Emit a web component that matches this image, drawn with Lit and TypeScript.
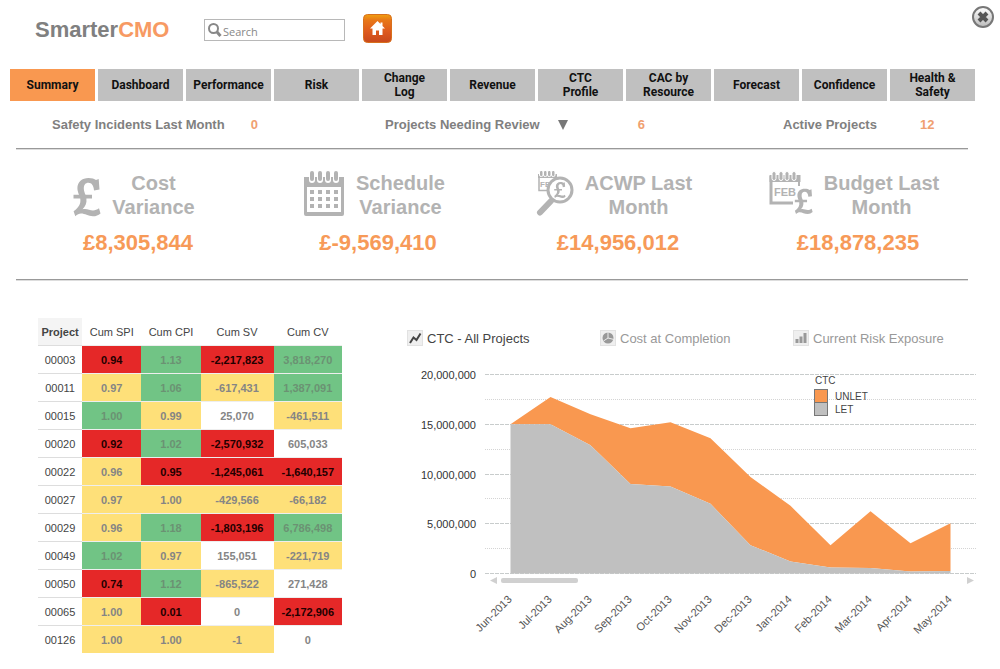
import { LitElement, html, svg, css } from "lit";
import { customElement, property, state } from "lit/decorators.js";
import { classMap } from "lit/directives/class-map.js";

type Tone = "r" | "g" | "y" | "n";
type Cell = [string, Tone];

const NAV: string[][] = [
  ["Summary"], ["Dashboard"], ["Performance"], ["Risk"], ["Change", "Log"], ["Revenue"],
  ["CTC", "Profile"], ["CAC by", "Resource"], ["Forecast"], ["Confidence"], ["Health &", "Safety"],
];

const COLUMNS = ["Cum SPI", "Cum CPI", "Cum SV", "Cum CV"];

const ROWS: { id: string; cells: Cell[] }[] = [
  { id: "00003", cells: [["0.94", "r"], ["1.13", "g"], ["-2,217,823", "r"], ["3,818,270", "g"]] },
  { id: "00011", cells: [["0.97", "y"], ["1.06", "g"], ["-617,431", "y"], ["1,387,091", "g"]] },
  { id: "00015", cells: [["1.00", "g"], ["0.99", "y"], ["25,070", "n"], ["-461,511", "y"]] },
  { id: "00020", cells: [["0.92", "r"], ["1.02", "g"], ["-2,570,932", "r"], ["605,033", "n"]] },
  { id: "00022", cells: [["0.96", "y"], ["0.95", "r"], ["-1,245,061", "r"], ["-1,640,157", "r"]] },
  { id: "00027", cells: [["0.97", "y"], ["1.00", "y"], ["-429,566", "y"], ["-66,182", "y"]] },
  { id: "00029", cells: [["0.96", "y"], ["1.18", "g"], ["-1,803,196", "r"], ["6,786,498", "g"]] },
  { id: "00049", cells: [["1.02", "g"], ["0.97", "y"], ["155,051", "n"], ["-221,719", "y"]] },
  { id: "00050", cells: [["0.74", "r"], ["1.12", "g"], ["-865,522", "y"], ["271,428", "n"]] },
  { id: "00065", cells: [["1.00", "y"], ["0.01", "r"], ["0", "n"], ["-2,172,906", "r"]] },
  { id: "00126", cells: [["1.00", "y"], ["1.00", "y"], ["-1", "y"], ["0", "n"]] },
];

/* Millions of pounds: [month, total, LET share] */
const CTC: [string, number, number][] = [
  ["Jun-2013", 15, 15], ["Jul-2013", 17.75, 15], ["Aug-2013", 16, 12.9], ["Sep-2013", 14.6, 9],
  ["Oct-2013", 15.2, 8.75], ["Nov-2013", 13.6, 7], ["Dec-2013", 9.7, 2.85], ["Jan-2014", 6.8, 1.2],
  ["Feb-2014", 2.85, 0.6], ["Mar-2014", 6.25, 0.55], ["Apr-2014", 3.05, 0.2], ["May-2014", 5.05, 0.25],
];

const calendarRings = (xs: number[]) =>
  xs.map((x) => svg`<rect x=${x} y="0.500" width="4" height="9" rx="2" fill="#b3b3b3" stroke="#fff" stroke-width="1"/>`);

/* Currency sign, drawn in a 28 by 40 box */
const POUND = "M26.500 12.500 21 13.400C20.600 8.500 18.500 5.800 15.500 5.800 12.500 5.800 10.800 8 10.800 11.200 10.800 13.600 11.600 15.500 12.500 17.700H19V21.500H13.400C14 26 12.400 29.500 9.500 32.300 13.500 31 16.500 33.400 20 33.400 22.300 33.400 24 32.700 26 31.300L27.500 36.500C25.300 38.400 23 39.300 20 39.300 15 39.300 12 36.600 8 36.600 6 36.600 4.300 37.400 2.300 39.300L.600 34.300C5.500 31 8.200 26.500 7.200 21.500H.500V17.700H6C5.200 15.700 4.400 13.700 4.400 11.300 4.400 5 9 1 15.500 1 19 1 21.300 1.800 23 3L25.700 2Z";

const ICONS: Record<string, unknown> = {
  pound: html`<svg width="28" height="46" viewBox="0 -6 28 46" aria-hidden="true"><path d=${POUND} fill="#b3b3b3"/></svg>`,
  calendar: html`<svg width="42" height="46" viewBox="0 0 42 46" aria-hidden="true">
    <path d="M1 6H41V43Q41 45 39 45H3Q1 45 1 43ZM4 16V41H38V16Z" fill="#b3b3b3" fill-rule="evenodd"/>
    ${[5, 13, 21, 29].map((x) => svg`<rect x=${x + 1} y="0" width="6" height="12" rx="3" fill="#fff"/><rect x=${x + 2} y="0" width="4" height="10" rx="2" fill="#b3b3b3"/>`)}
    ${[19, 26, 33].map((y) => [7, 15, 23, 31].map((x) => svg`<rect x=${x} y=${y} width="4" height="4" fill="#b3b3b3"/>`))}
  </svg>`,
  search: html`<svg width="38" height="46" viewBox="0 0 38 46" aria-hidden="true">
    <path d="M3 4V19.500H13M20 4V8" fill="none" stroke="#b3b3b3" stroke-width="1.500"/>
    <rect x="2" y="3" width="19" height="4" fill="#b3b3b3"/>
    ${[4, 8, 12, 16].map((x) => svg`<rect x=${x - 0.5} y="-.500" width="3.500" height="6" rx="1.500" fill="#b3b3b3" stroke="#fff" stroke-width="1"/>`)}
    <text x="4" y="16" font-family="Liberation Sans" font-size="8" font-weight="700" fill="#b3b3b3">FEB</text>
    <path d="M15 30 4 41.500" stroke="#b3b3b3" stroke-width="6" stroke-linecap="round"/>
    <path d="M19 26 14 31" stroke="#b3b3b3" stroke-width="3"/>
    <circle cx="24" cy="19" r="12" fill="#fff" stroke="#b3b3b3" stroke-width="3"/>
    <path transform="translate(18 10.500) scale(.420)" d=${POUND} fill="#b3b3b3"/>
  </svg>`,
  budget: html`<svg width="44" height="46" viewBox="0 0 44 46" aria-hidden="true">
    <path d="M2 5V32H24" fill="none" stroke="#b3b3b3" stroke-width="3"/>
    <path d="M30 5V15" fill="none" stroke="#b3b3b3" stroke-width="2"/>
    <rect x=".500" y="4" width="31" height="7" fill="#b3b3b3"/>
    ${calendarRings([3, 10, 16, 23])}
    <text x="5" y="25" font-family="Liberation Sans" font-size="11" font-weight="700" fill="#b3b3b3">FEB</text>
    <path transform="translate(25.500 17) scale(.660)" d=${POUND} fill="#b3b3b3" stroke="#fff" stroke-width="4" paint-order="stroke"/>
  </svg>`,
};

const KPIS = [
  { icon: "pound", title: ["Cost", "Variance"], value: "£8,305,844" },
  { icon: "calendar", title: ["Schedule", "Variance"], value: "£-9,569,410" },
  { icon: "search", title: ["ACWP Last", "Month"], value: "£14,956,012" },
  { icon: "budget", title: ["Budget Last", "Month"], value: "£18,878,235" },
];

const lines = (parts: string[]) => parts.map((p, i) => (i ? html`<br />${p}` : p));

@customElement("project-table")
class ProjectTable extends LitElement {
  static styles = css`
    :host { display: block; }
    .grid { width: 100%; border-collapse: collapse; table-layout: fixed; font-size: 11px; color: #444; }
    .grid th, .grid td { height: 27px; padding: 0; text-align: center; border-bottom: 1px solid #ddd; }
    .grid thead th { font-weight: 400; border-bottom-color: #eee; }
    .grid thead .key { width: 14.5%; font-weight: 700; background: #f4f4f4; border-bottom-color: #ddd; }
    .grid tbody th { font-weight: 400; }
    .grid .idx { width: 19.5%; }
    .grid .sv { width: 24%; }
    .grid tbody td { font-weight: 700; color: #858585; border-bottom-color: #eee; }
    .grid tbody tr:last-child > * { border-bottom: 0; }
    .grid tbody .r { background: #e52828; color: #200; }
    .grid tbody .g { background: #71c485; color: #6b9273; }
    .grid tbody .y { background: #fee079; }
  `;
  render() {
    return html`<table class="grid">
      <thead><tr>
        <th class="key" scope="col">Project</th>
        ${COLUMNS.map((c, i) => html`<th scope="col" class=${classMap({ idx: i < 2, sv: i === 2 })}>${c}</th>`)}
      </tr></thead>
      <tbody>${ROWS.map((r) => html`<tr><th scope="row">${r.id}</th>${r.cells.map(([v, t]) => html`<td class=${t}>${v}</td>`)}</tr>`)}</tbody>
    </table>`;
  }
}

@customElement("ctc-chart")
class CtcChart extends LitElement {
  static styles = css`
    :host { display: block; }
    .plot { display: block; width: 100%; height: auto; font-family: "Liberation Sans", Arial, sans-serif; font-size: 11px; }
    .major { stroke: #c8cccc; stroke-dasharray: 4 1; }
    .minor { stroke: #d4d4d4; stroke-dasharray: 1 1; }
    .axis { fill: #333; text-anchor: end; }
    .month { fill: #555; text-anchor: end; }
    .legend { fill: #444; font-size: 10px; }
    .unlet { fill: #f99850; }
    .let { fill: #c0c0c0; }
    .swatch { stroke: #777; }
    .bar { fill: #d0d0d0; }
  `;
  private x = (i: number) => 110.5 + 40 * i;
  private y = (v: number) => 208.5 - 9.95 * v;
  private edge(col: 1 | 2) {
    return CTC.map((d, i) => `${this.x(i)},${this.y(d[col])}`);
  }
  render() {
    const row = (v: number) => Math.floor(this.y(v)) + 0.5;
    const band = [...this.edge(1), ...this.edge(2).reverse()].join(" ");
    const base = [`${this.x(0)},${this.y(0)}`, ...this.edge(2), `${this.x(CTC.length - 1)},${this.y(0)}`].join(" ");
    return html`<svg class="plot" viewBox="0 0 580 280" role="img" aria-label="CTC by month">
      ${[2.5, 7.5, 12.5, 17.5].map((v) => svg`<line class="minor" x1="85" x2="576" y1=${row(v)} y2=${row(v)}/>`)}
      ${[0, 5, 10, 15, 20].map((v) => svg`
        <line class="major" x1="85" x2="576" y1=${row(v)} y2=${row(v)}/>
        <text class="axis" x="76" y=${row(v) + 4.5}>${(v * 1e6).toLocaleString("en-GB")}</text>`)}
      <polygon class="unlet" points=${band}/>
      <polygon class="let" points=${base}/>
      <path class="bar" d="M97 212v7l-7-3.500zM567 212v7l7-3.500z"/>
      <rect class="bar" x="101" y="213" width="77" height="5" rx="2"/>
      ${CTC.map((d, i) => svg`<text class="month" transform="translate(${this.x(i) + 2} 235) rotate(-45)">${d[0]}</text>`)}
      <rect class="unlet swatch" x="414.500" y="24.500" width="13" height="13"/>
      <rect class="let swatch" x="414.500" y="37.500" width="13" height="13"/>
      <text class="legend" x="415" y="19">CTC</text>
      <text class="legend" x="435" y="35">UNLET</text>
      <text class="legend" x="435" y="48">LET</text>
    </svg>`;
  }
}

@customElement("kpi-card")
class KpiCard extends LitElement {
  @property() icon = "";
  @property() value = "";
  @property({ type: Array }) heading: string[] = [];
  static styles = css`
    :host { display: block; text-align: center; }
    .top { display: flex; justify-content: center; gap: 11px; padding-right: 8px; }
    .art { display: flex; align-items: flex-start; height: 46px; }
    .title { margin: 0; font-size: 20px; line-height: 24px; font-weight: 700; color: #b3b3b3; }
    .value { margin: 11px 0 0; font-size: 22px; line-height: 26px; font-weight: 700; color: #f79a58; }
  `;
  render() {
    return html`<div class="top"><span class="art">${ICONS[this.icon]}</span><h2 class="title">${lines(this.heading)}</h2></div>
      <p class="value">${this.value}</p>`;
  }
}

@customElement("app-root")
class AppRoot extends LitElement {
  @state() private tab = 0;
  @state() private view = 0;

  static styles = css`
    :host { display: block; background: #fff; font-family: "Liberation Sans", Arial, sans-serif; color: #808080; }
    button, input { font: inherit; }
    .head { display: flex; align-items: flex-start; height: 69px; padding: 0 5px 0 35px; box-sizing: border-box; }
    .logo { min-width: 136px; margin: 14px 33px 0 0; font-size: 22px; line-height: 32px; font-weight: 700; color: #808080; }
    .logo .hot { color: #f79a63; }
    .search { display: flex; align-items: center; width: 141px; height: 22px; margin: 19px 18px 0 0; padding: 0 3px 0 2px; box-sizing: border-box; border: 1px solid #b8b8b8; }
    .search .field { flex: 1; min-width: 0; padding: 3px 0 0 1px; border: 0; outline: 0; background: none; font-family: "Open Sans", sans-serif; font-size: 11px; color: #555; }
    .search .field::placeholder { color: #888; opacity: 1; }
    .search .glass { display: flex; }
    .icon-btn { display: flex; padding: 0; border: 0; background: none; cursor: pointer; }
    .home { margin-top: 14px; }
    .close { margin: 5px 0 0 auto; }
    .nav { display: grid; grid-template-columns: repeat(11, 1fr); gap: 3px; padding: 0 25px 0 10px; }
    .nav .item { display: flex; align-items: center; justify-content: center; height: 32px; padding: 0; background: #c0c0c0; color: #111; font-family: Roboto, sans-serif; font-size: 12px; line-height: 14px; font-weight: 700; text-align: center; text-decoration: none; }
    .nav .on { background: #f99850; }
    .stats { display: grid; grid-template-columns: 333fr 398fr 185fr; padding: 0 32px 0 52px; height: 47px; align-items: center; font-size: 13px; font-weight: 700; }
    .stat { display: flex; align-items: center; gap: 26px; }
    .stat.wide { gap: 70px; }
    .stat.end { gap: 43px; }
    .stat .num { color: #f0a070; }
    .pick { display: flex; align-items: center; gap: 18px; padding: 0; border: 0; background: none; color: inherit; font-weight: 700; }
    .rule { height: 1px; margin: 0 32px 0 16px; border: 0; background: #999; border-bottom: 1px solid #ddd; }
    .kpis { display: grid; grid-template-columns: repeat(4, 1fr); padding: 21px 22px 23px 18px; }
    .body { display: grid; grid-template-columns: 304fr 580fr; gap: 58px; padding: 37px 20px 14px 38px; align-items: start; }
    .views { display: grid; grid-template-columns: 193fr 193fr 187fr; margin: 8px 0 15px; padding-left: 7px; }
    .view { display: flex; align-items: center; gap: 4px; height: 24px; padding: 0; border: 0; background: none; font-size: 13px; color: #999; white-space: nowrap; cursor: pointer; }
    .view.on { color: #444; }
  `;

  private viewIcon(i: number) {
    const art = [
      svg`<path d="M3 13 6.500 7.500 9.500 10 13.500 3.500" fill="none" stroke="#444" stroke-width="2"/>`,
      svg`<circle cx="8" cy="8" r="5.500" fill="#999"/><path d="M8 2V8L3.500 11M8 8 14 9.500" fill="none" stroke="#ececec" stroke-width="1"/>`,
      svg`<path d="M2.500 9h3v4h-3zM6.500 6.500h3V13h-3zM10.500 3h3v10h-3z" fill="#999"/>`,
    ][i];
    return html`<svg width="16" height="16" viewBox="0 0 16 16" aria-hidden="true">
      <rect x="0.500" y="0.500" width="15" height="15" fill="#efefef" stroke="#e2e2e2"/>${art}</svg>`;
  }

  render() {
    return html`
      <header class="head">
        <h1 class="logo">Smarter<span class="hot">CMO</span></h1>
        <div class="search">
          <label class="glass" for="q" aria-label="Search">
            <svg width="15" height="16" viewBox="0 0 15 16" aria-hidden="true">
              <circle cx="6.500" cy="6.500" r="4.500" fill="none" stroke="#888" stroke-width="2"/>
              <path d="M10 10 13.500 14" stroke="#888" stroke-width="3"/></svg>
          </label>
          <input id="q" class="field" type="text" placeholder="Search" />
        </div>
        <button class="icon-btn home" aria-label="Home">
          <svg width="29" height="29" viewBox="0 0 29 29" aria-hidden="true">
            <defs><linearGradient id="hg" x1="0" y1="0" x2="0" y2="1">
              <stop offset="0" stop-color="#f0a010"/><stop offset=".2" stop-color="#e87818"/>
              <stop offset=".6" stop-color="#de5a1e"/><stop offset="1" stop-color="#c8481c"/></linearGradient></defs>
            <rect x="0.500" y="0.500" width="28" height="28" rx="4" fill="url(#hg)" stroke="#d8701c"/>
            <path d="M14.500 7 7 14.500H9.500V21H13V16.500H16V21H19.500V14.500H22L19.500 12V8.500H17.500V10Z" fill="#fff"/></svg>
        </button>
        <button class="icon-btn close" aria-label="Close">
          <svg width="24" height="24" viewBox="0 0 24 24" aria-hidden="true">
            <defs><linearGradient id="cg" x1="0" y1="0" x2="0" y2="1"><stop offset="0" stop-color="#fff"/><stop offset="1" stop-color="#bbb"/></linearGradient></defs>
            <circle cx="12" cy="12" r="10" fill="url(#cg)" stroke="#777" stroke-width="2"/>
            <path d="M8 8 16 16M16 8 8 16" stroke="#555" stroke-width="4"/></svg>
        </button>
      </header>
      <nav class="nav">
        ${NAV.map((n, i) => html`<a href="#" class=${classMap({ item: true, on: this.tab === i })}
          @click=${(e: Event) => { e.preventDefault(); this.tab = i; }}><span>${lines(n)}</span></a>`)}
      </nav>
      <section class="stats">
        <div class="stat"><span>Safety Incidents Last Month</span><span class="num">0</span></div>
        <div class="stat wide">
          <button class="pick">Projects Needing Review
            <svg width="10" height="10" viewBox="0 0 10 10" aria-hidden="true"><path d="M0 0H10L5 10Z" fill="#777"/></svg>
          </button><span class="num">6</span></div>
        <div class="stat end"><span>Active Projects</span><span class="num">12</span></div>
      </section>
      <hr class="rule" />
      <section class="kpis">
        ${KPIS.map((k) => html`<kpi-card .icon=${k.icon} .heading=${k.title} .value=${k.value}></kpi-card>`)}
      </section>
      <hr class="rule" />
      <main class="body">
        <project-table></project-table>
        <section>
          <div class="views">
            ${["CTC - All Projects", "Cost at Completion", "Current Risk Exposure"].map((t, i) => html`
              <button class=${classMap({ view: true, on: this.view === i })} @click=${() => (this.view = i)}>${this.viewIcon(i)}<span>${t}</span></button>`)}
          </div>
          <ctc-chart></ctc-chart>
        </section>
      </main>`;
  }
}
